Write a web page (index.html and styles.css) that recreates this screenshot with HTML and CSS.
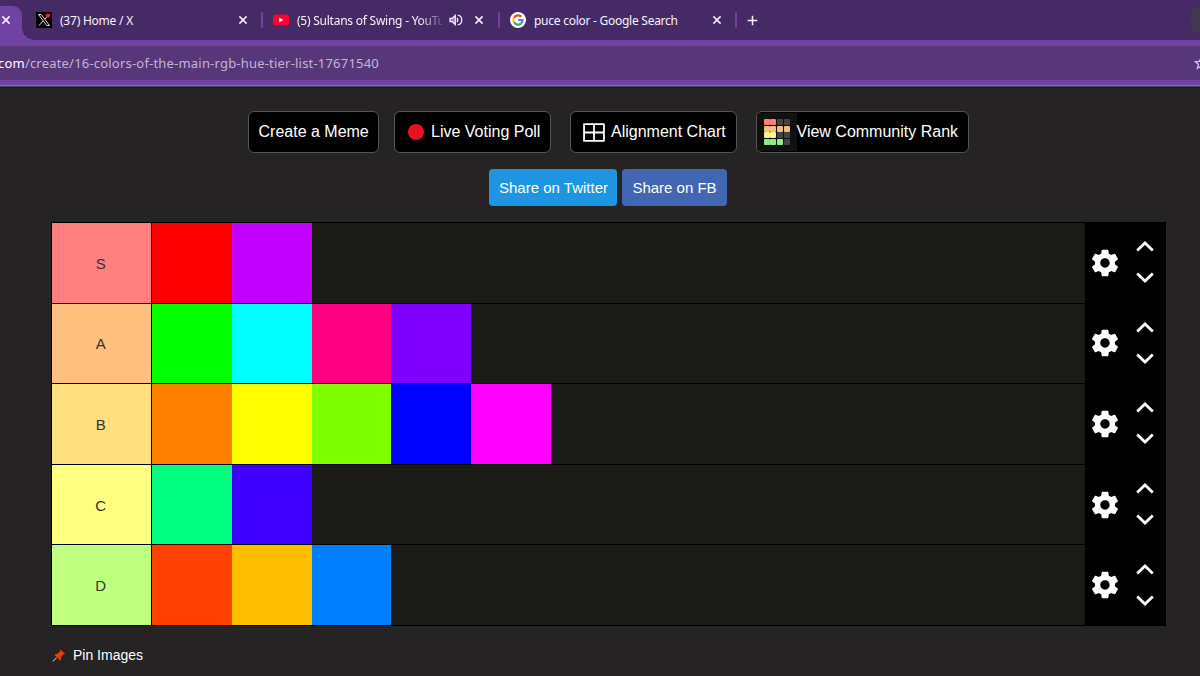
FILE: index.html
```html
<!DOCTYPE html>
<html lang="en">
<head>
<meta charset="utf-8">
<title>16 colors of the main RGB hue tier list</title>
<link rel="stylesheet" href="styles.css">
</head>
<body>
<svg class="defs" width="0" height="0" aria-hidden="true">
  <symbol id="close" viewBox="0 0 10 10"><path d="M1.4 1.4 8.6 8.6M8.6 1.4 1.4 8.6" stroke="#f5effb" stroke-width="1.6" fill="none"/></symbol>
  <symbol id="gear" viewBox="0 0 24 24"><path fill="#fff" d="M19.43 12.98c.04-.32.07-.64.07-.98s-.03-.66-.07-.98l2.11-1.65c.19-.15.24-.42.12-.64l-2-3.46c-.12-.22-.39-.3-.61-.22l-2.49 1c-.52-.4-1.08-.73-1.69-.98l-.38-2.65C14.46 2.18 14.25 2 14 2h-4c-.25 0-.46.18-.49.42l-.38 2.65c-.61.25-1.17.59-1.69.98l-2.49-1c-.23-.09-.49 0-.61.22l-2 3.46c-.13.22-.07.49.12.64l2.11 1.65c-.04.32-.07.65-.07.98s.03.66.07.98l-2.11 1.65c-.19.15-.24.42-.12.64l2 3.46c.12.22.39.3.61.22l2.49-1c.52.4 1.08.73 1.69.98l.38 2.65c.03.24.24.42.49.42h4c.25 0 .46-.18.49-.42l.38-2.65c.61-.25 1.17-.59 1.69-.98l2.49 1c.23.09.49 0 .61-.22l2-3.46c.12-.22.07-.49-.12-.64l-2.11-1.65zM12 15.5c-1.93 0-3.5-1.57-3.5-3.500s1.570-3.500 3.500-3.500 3.500 1.570 3.500 3.500-1.570 3.500-3.500 3.500z"/></symbol>
  <symbol id="up" viewBox="0 0 18 11"><path d="M1.200 9.600 9 2l7.800 7.600" stroke="#fff" stroke-width="2.800" fill="none"/></symbol>
  <symbol id="down" viewBox="0 0 18 11"><path d="M1.200 1.400 9 9l7.800-7.600" stroke="#fff" stroke-width="2.800" fill="none"/></symbol>
</svg>

<header class="browser">
  <div class="tabstrip">
    <div class="tab-active"><svg class="x"><use href="#close"/></svg></div>
    <div class="tab-foot"></div>
    <div class="tab tab-home">
      <svg class="favicon" viewBox="0 0 16 16"><rect width="16" height="16" fill="#000"/><path d="M2.500 2.500h2.700l8.300 11h-2.700zM13 2.500 8.700 7.300M7.100 9 3 13.500" fill="none" stroke="#ddd" stroke-width="1"/><circle cx="12" cy="3.500" r="2.100" fill="#f4212e"/></svg>
      <span class="tab-title t1">(37) Home / X</span>
      <svg class="x"><use href="#close"/></svg>
    </div>
    <i class="sep"></i>
    <div class="tab tab-video">
      <svg class="favicon" viewBox="0 0 16 16"><rect y="2.500" width="16" height="11" rx="2.500" fill="#f03"/><path d="M6.300 5.700v4.600l4.200-2.300z" fill="#fff"/></svg>
      <span class="tab-title t2">(5) Sultans of Swing - YouTu</span>
      <svg class="sound" viewBox="0 0 14 12"><path d="M1 4.300h2.300L6.300 1.500v9L3.300 7.700H1z" fill="#eee" fill-opacity=".45" stroke="#f4edfa" stroke-width="1.200"/><path d="M8 4q1.600 2 0 4M8.800 1.100a5 5 0 0 1 0 9.800" fill="none" stroke="#f4edfa" stroke-width="1.300"/></svg>
      <svg class="x"><use href="#close"/></svg>
    </div>
    <i class="sep"></i>
    <div class="tab tab-search">
      <svg class="favicon" viewBox="0 0 16 16"><circle cx="8" cy="8" r="8" fill="#fff"/><g fill="none" stroke-width="2.200"><path d="M4 5.700A4.600 4.600 0 0 1 11.300 4.800" stroke="#ea4335"/><path d="M4 5.700a4.600 4.600 0 0 0 0 4.600" stroke="#fbbc05"/><path d="M4 10.300a4.600 4.600 0 0 0 7 1.200" stroke="#34a853"/><path d="M11 11.500A4.600 4.600 0 0 0 12.600 8H8.200" stroke="#4285f4"/></g></svg>
      <span class="tab-title t3">puce color - Google Search</span>
      <svg class="x"><use href="#close"/></svg>
    </div>
    <i class="sep"></i>
    <svg class="plus" viewBox="0 0 12 12"><path d="M6 .8v10.400M.8 6h10.400" stroke="#f5effb" stroke-width="1.700"/></svg>
    <div class="tab-search-btn"></div>
  </div>
  <div class="toolbar">
    <div class="address">
      <span class="url"><b>com</b>/create/16-colors-of-the-main-rgb-hue-tier-list-17671540</span>
      <svg class="star" viewBox="0 0 14 14"><path d="m7 1.500 1.600 3.800 4.100.3-3.100 2.700 1 4L7 10.100l-3.600 2.200 1-4-3.100-2.700 4.100-.3z" fill="none" stroke="#d5cbdd" stroke-width="1.300"/></svg>
    </div>
  </div>
</header>

<main class="page">
  <nav class="actions">
    <a class="btn meme"><span>Create a Meme</span></a>
    <a class="btn poll"><svg viewBox="0 0 16 16"><circle cx="8" cy="8" r="8" fill="#e81224"/></svg><span>Live Voting Poll</span></a>
    <a class="btn align"><svg viewBox="0 0 21 18"><path d="M1 1h19v16H1zM10.500 1v16M1 9h19" fill="none" stroke="#fff" stroke-width="1.700" stroke-linejoin="round"/></svg><span>Alignment Chart</span></a>
    <a class="btn rank">
      <span class="mini">
        <i class="r"></i><i class="r"></i><i></i><i></i>
        <i class="o"></i><i class="o"></i><i class="o"></i><i class="o"></i>
        <i class="y"></i><i class="y"></i><i></i><i></i>
        <i class="g"></i><i class="g"></i><i class="g"></i><i></i>
      </span><span>View Community Rank</span></a>
  </nav>
  <div class="share">
    <a class="twitter"><span>Share on Twitter</span></a>
    <a class="facebook"><span>Share on FB</span></a>
  </div>

  <section class="tiers">
    <div class="tier"><div class="label s">S</div><div class="items"><i class="red"></i><i class="purple"></i></div><div class="tools"><svg class="gear"><use href="#gear"/></svg><div class="move"><svg><use href="#up"/></svg><svg><use href="#down"/></svg></div></div></div>
    <div class="tier"><div class="label a">A</div><div class="items"><i class="green"></i><i class="cyan"></i><i class="rose"></i><i class="violet"></i></div><div class="tools"><svg class="gear"><use href="#gear"/></svg><div class="move"><svg><use href="#up"/></svg><svg><use href="#down"/></svg></div></div></div>
    <div class="tier"><div class="label b">B</div><div class="items"><i class="orange"></i><i class="yellow"></i><i class="lime"></i><i class="blue"></i><i class="magenta"></i></div><div class="tools"><svg class="gear"><use href="#gear"/></svg><div class="move"><svg><use href="#up"/></svg><svg><use href="#down"/></svg></div></div></div>
    <div class="tier"><div class="label c">C</div><div class="items"><i class="spring"></i><i class="indigo"></i></div><div class="tools"><svg class="gear"><use href="#gear"/></svg><div class="move"><svg><use href="#up"/></svg><svg><use href="#down"/></svg></div></div></div>
    <div class="tier"><div class="label d">D</div><div class="items"><i class="vermilion"></i><i class="amber"></i><i class="azure"></i></div><div class="tools"><svg class="gear"><use href="#gear"/></svg><div class="move"><svg><use href="#up"/></svg><svg><use href="#down"/></svg></div></div></div>
  </section>

  <div class="pin">
    <svg viewBox="0 0 15 15"><path d="M6 8.600.8 13.900" stroke="#aaa" stroke-width="1.200"/><path d="m9 .6 5.400 5-1.200 1.200-1-.1-2.300 2.800.2 2.800-1.300 1.100L2 6.700l1.200-1.200 2.800.2 2.500-2.500-.4-1.500z" fill="#ea3a0e" stroke="#160b08" stroke-width=".5"/><path d="m5 7 3.800-3.400" stroke="#ff6a3c" stroke-width=".8"/></svg>
    <span>Pin Images</span>
  </div>
</main>
</body>
</html>
```
FILE: styles.css
```css
* { box-sizing: border-box; }
body { margin: 0; width: 1200px; height: 676px; overflow: hidden; background: #252323; color: #fff; font-family: "Liberation Sans", Arial, sans-serif; }
svg { display: block; flex: none; }
.defs { position: absolute; }
span { white-space: nowrap; }

/* Browser chrome */
.browser { height: 88px; font-family: "Noto Sans", "Open Sans", sans-serif; }
.tabstrip { height: 40px; background: #462a66; display: flex; align-items: center; }
.tab-active { width: 22px; height: 34px; align-self: flex-end; background: #6f42a3; border-radius: 0 9px 0 0; padding: 9px 0 0 1px; }
.tab-foot { width: 12px; height: 12px; align-self: flex-end; background: radial-gradient(circle at 100% 0, transparent 11.5px, #6f42a3 12px); }
.x { width: 10px; height: 10px; }
.tab { display: flex; align-items: center; }
.tab-home { width: 227px; padding-left: 2px; }
.tab-video { width: 235px; padding-left: 10px; }
.tab-search { width: 235px; padding-left: 10px; }
.favicon { width: 16px; height: 16px; margin-right: 8px; }
.tab-title { font-size: 12px; line-height: 16px; padding-top: 1px; color: #f7f2fb; }
.t1 { width: 178px; letter-spacing: -.23px; }
.t2 { width: 145px; margin-right: 7px; letter-spacing: -.24px; -webkit-mask-image: linear-gradient(90deg, #000 122px, transparent 150px); }
.t3 { width: 178px; letter-spacing: -.26px; }
.sound { width: 14px; height: 12px; margin-right: 11px; }
.sep { width: 2px; height: 16px; background: #7042a4; }
.plus { width: 11px; height: 11px; margin-left: 10px; }
.tab-search-btn { width: 9px; height: 28px; margin-left: auto; border-radius: 9px 0 0 9px; background: #443850; }
.toolbar { height: 48px; background: linear-gradient(#6f42a3 45px, #8c65b0 45px, #8c65b0 46px, #514158 46px, #514158 47px, #1b1919 47px); padding-top: 6px; }
.address { height: 34px; background: #57377a; display: flex; align-items: center; justify-content: space-between; overflow: hidden; }
.url { font-size: 13px; margin-left: -2px; letter-spacing: .2px; color: #c5b5d5; }
.url b { font-weight: 400; color: #fff; }
.star { width: 14px; height: 14px; margin-right: -8px; }

/* Buttons */
.page { padding: 23px 0 0 51px; }
.actions { display: flex; padding-left: 197px; font-size: 16px; }
.btn { height: 42px; border: 1px solid #555; border-radius: 6px; background: #000; display: flex; align-items: center; overflow: hidden; }
.meme { width: 131px; margin-right: 15px; padding-left: 9.500px; }
.poll { width: 157px; margin-right: 19px; padding-left: 13px; }
.poll svg { width: 16px; height: 16px; margin-right: 7px; }
.align { width: 167px; margin-right: 19px; padding-left: 12px; }
.align svg { width: 22px; height: 19px; margin-right: 6px; }
.rank { width: 213px; }
.mini { width: 39.500px; height: 38px; padding: 6px 6.500px; background: #111; display: grid; grid-template-columns: repeat(4, 6px); grid-auto-rows: 6px; gap: .7px; }
.mini i { background: #444; border-radius: 1px; }
.mini .r { background: #ff7f7e; }
.mini .o { background: #f6bd7f; }
.mini .y { background: #fdf680; }
.mini .g { background: #8cf080; }
.share { display: flex; gap: 5px; padding: 16px 0 0 438px; font-size: 15px; }
.share a { height: 37px; border-radius: 4px; display: flex; align-items: center; justify-content: center; }
.twitter { width: 128px; padding-left: 1px; background: #1d95e2; }
.facebook { width: 105px; background: #4267b2; }

/* Tier table */
.tiers { width: 1115px; height: 404px; margin-top: 16px; padding: 1px 0 1px 1px; background: #000; display: grid; grid-template-rows: repeat(5, 1fr); row-gap: 1px; }
.tier { display: grid; grid-template-columns: 99.400px 933px 80px; column-gap: 1px; min-height: 0; }
.label { display: flex; align-items: center; justify-content: center; padding: 1px 2px 0 0; color: #333; font-size: 15px; }
.s { background: #ff7f7f; }
.a { background: #ffbf7f; }
.b { background: #ffdf80; }
.c { background: #ffff7f; }
.d { background: #bfff7f; }
.items { display: flex; background: #1a1a17; }
.items i { width: 79.700px; }
.red { background: #f00; }
.purple { background: #bf00ff; }
.green { background: #0f0; }
.cyan { background: #0ff; }
.rose { background: #ff0080; }
.violet { background: #8000ff; }
.orange { background: #ff8000; }
.yellow { background: #ff0; }
.lime { background: #80ff00; }
.blue { background: #00f; }
.magenta { background: #f0f; }
.spring { background: #00ff80; }
.indigo { background: #4000ff; }
.vermilion { background: #ff4000; }
.amber { background: #ffbf00; }
.azure { background: #0080ff; }
.tools { display: flex; align-items: center; padding-left: 3px; }
.gear { width: 32px; height: 32px; }
.move { display: flex; flex-direction: column; gap: 20px; margin: -1px 0 0 15px; }
.move svg { width: 18px; height: 11px; }
.pin { display: flex; align-items: center; gap: 7px; margin-top: 21px; padding-left: 1px; font-size: 14px; line-height: 16px; }
.pin svg { width: 14px; height: 15px; }
```
